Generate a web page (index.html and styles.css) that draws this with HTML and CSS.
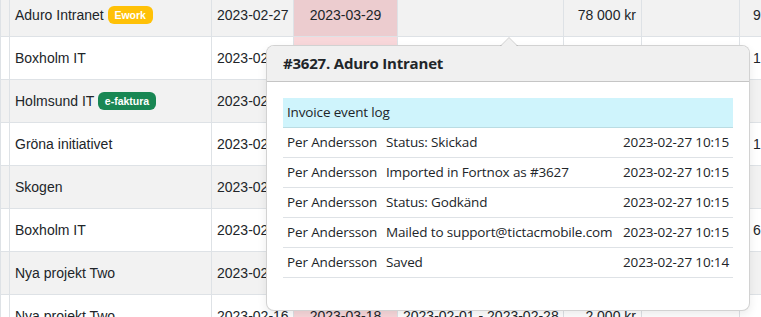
FILE: index.html
```html
<!DOCTYPE html>
<html lang="sv">
<head>
    <meta charset="UTF-8">
    <meta name="viewport" content="width=device-width, initial-scale=1.0">
    <title>Fakturor</title>
    <link rel="stylesheet" href="styles.css">
</head>
<body>
    <div class="page">
        <table class="invoices">
            <colgroup>
                <col class="c-sel">
                <col class="c-name">
                <col class="c-date">
                <col class="c-due">
                <col class="c-period">
                <col class="c-amount">
                <col class="c-extra">
                <col class="c-last">
            </colgroup>
            <tbody>
                <tr>
                    <td></td>
                    <td>Aduro Intranet <span class="badge badge-ework">Ework</span></td>
                    <td>2023-02-27</td>
                    <td class="due">2023-03-29</td>
                    <td></td>
                    <td class="amount">78 000 kr</td>
                    <td></td>
                    <td class="last">9</td>
                </tr>
                <tr>
                    <td></td>
                    <td>Boxholm IT</td>
                    <td>2023-02-24</td>
                    <td class="due">2023-03-26</td>
                    <td>2023-02-01 - 2023-02-28</td>
                    <td class="amount">12 500 kr</td>
                    <td></td>
                    <td class="last">1</td>
                </tr>
                <tr>
                    <td></td>
                    <td>Holmsund IT <span class="badge badge-efaktura">e-faktura</span></td>
                    <td>2023-02-22</td>
                    <td class="due">2023-03-24</td>
                    <td>2023-02-01 - 2023-02-28</td>
                    <td class="amount">8 000 kr</td>
                    <td></td>
                    <td class="last"></td>
                </tr>
                <tr>
                    <td></td>
                    <td>Gröna initiativet</td>
                    <td>2023-02-20</td>
                    <td class="due">2023-03-22</td>
                    <td>2023-02-01 - 2023-02-28</td>
                    <td class="amount">15 000 kr</td>
                    <td></td>
                    <td class="last">1</td>
                </tr>
                <tr>
                    <td></td>
                    <td>Skogen</td>
                    <td>2023-02-20</td>
                    <td class="due">2023-03-22</td>
                    <td>2023-02-01 - 2023-02-28</td>
                    <td class="amount">4 000 kr</td>
                    <td></td>
                    <td class="last"></td>
                </tr>
                <tr>
                    <td></td>
                    <td>Boxholm IT</td>
                    <td>2023-02-17</td>
                    <td class="due">2023-03-19</td>
                    <td>2023-01-01 - 2023-01-31</td>
                    <td class="amount">6 000 kr</td>
                    <td></td>
                    <td class="last">6</td>
                </tr>
                <tr>
                    <td></td>
                    <td>Nya projekt Two</td>
                    <td>2023-02-16</td>
                    <td class="due">2023-03-18</td>
                    <td>2023-02-01 - 2023-02-28</td>
                    <td class="amount">3 000 kr</td>
                    <td></td>
                    <td class="last"></td>
                </tr>
                <tr>
                    <td></td>
                    <td>Nya projekt Two</td>
                    <td>2023-02-16</td>
                    <td class="due">2023-03-18</td>
                    <td>2023-02-01 - 2023-02-28</td>
                    <td class="amount">2 000 kr</td>
                    <td></td>
                    <td class="last"></td>
                </tr>
            </tbody>
        </table>

        <!-- Popover med fakturans händelselogg -->
        <div class="popover">
            <div class="popover-arrow"></div>
            <h3 class="popover-header">#3627. Aduro Intranet</h3>
            <div class="popover-body">
                <table class="log">
                    <tr class="log-title">
                        <td colspan="3">Invoice event log</td>
                    </tr>
                    <tr>
                        <td>Per Andersson</td>
                        <td>Status: Skickad</td>
                        <td class="time">2023-02-27 10:15</td>
                    </tr>
                    <tr>
                        <td>Per Andersson</td>
                        <td>Imported in Fortnox as #3627</td>
                        <td class="time">2023-02-27 10:15</td>
                    </tr>
                    <tr>
                        <td>Per Andersson</td>
                        <td>Status: Godkänd</td>
                        <td class="time">2023-02-27 10:15</td>
                    </tr>
                    <tr>
                        <td>Per Andersson</td>
                        <td>Mailed to support@tictacmobile.com</td>
                        <td class="time">2023-02-27 10:15</td>
                    </tr>
                    <tr>
                        <td>Per Andersson</td>
                        <td>Saved</td>
                        <td class="time">2023-02-27 10:14</td>
                    </tr>
                </table>
            </div>
        </div>
    </div>
</body>
</html>
```

FILE: styles.css
```css
body {
    margin: 0;
    padding: 0;
    background-color: #fff;
    color: #212529;
    font-family: "Liberation Sans", Arial, sans-serif;
    overflow: hidden;
}

.page {
    position: relative;
    width: 761px;
    height: 317px;
    overflow: hidden;
}

.invoices {
    width: 820px;
    margin-top: -7px;
    border-collapse: collapse;
    table-layout: fixed;
    font-size: 14px;
}

.c-sel { width: 9px; }
.c-name { width: 202px; }
.c-date { width: 82px; }
.c-due { width: 104px; }
.c-period { width: 166px; }
.c-amount { width: 78px; }
.c-extra { width: 98px; }
.c-last { width: 81px; }

.invoices td {
    padding: 11px 5px 10px;
    line-height: 21px;
    border: 1px solid #dee2e6;
    white-space: nowrap;
    overflow: hidden;
}

.invoices tr:nth-child(odd) td {
    background-color: #f2f2f2;
}

.invoices td.due {
    background-color: #f8d7da;
    text-align: center;
}

.invoices tr:nth-child(odd) td.due {
    background-color: #eccccf;
}

.invoices td.amount {
    text-align: right;
}

.invoices td.last {
    padding-left: 13px;
}

.badge {
    display: inline-block;
    padding: 0.35em 0.65em;
    font-size: 10.5px;
    font-weight: bold;
    line-height: 1;
    color: #fff;
    border-radius: 6px;
    vertical-align: 1px;
}

.badge-ework {
    background-color: #ffc107;
}

.badge-efaktura {
    background-color: #198754;
}

/* Popover */
.popover {
    position: absolute;
    left: 266px;
    top: 45px;
    width: 482px;
    background-color: #fff;
    border: 1px solid rgba(0, 0, 0, 0.175);
    border-radius: 8px;
    box-shadow: 0 4px 10px rgba(0, 0, 0, 0.08);
    font-family: "Open Sans", "Noto Sans", sans-serif;
}

.popover-arrow {
    position: absolute;
    top: -9px;
    left: 233px;
    width: 0;
    height: 0;
    border-left: 9px solid transparent;
    border-right: 9px solid transparent;
    border-bottom: 9px solid rgba(0, 0, 0, 0.175);
}

.popover-arrow::after {
    content: "";
    position: absolute;
    left: -8px;
    top: 1px;
    border-left: 8px solid transparent;
    border-right: 8px solid transparent;
    border-bottom: 8px solid #f0f0f0;
}

.popover-header {
    margin: 0;
    padding: 8px 16px;
    font-size: 15px;
    font-weight: bold;
    line-height: 19px;
    letter-spacing: -0.2px;
    background-color: #f0f0f0;
    border-bottom: 1px solid rgba(0, 0, 0, 0.175);
    border-radius: 7px 7px 0 0;
}

.popover-body {
    padding: 16px;
}

.log {
    width: 100%;
    margin-bottom: 16px;
    border-collapse: collapse;
    font-size: 13.5px;
    letter-spacing: -0.15px;
}

.log td {
    padding: 4px;
    line-height: 21px;
    border-bottom: 1px solid #dee2e6;
    white-space: nowrap;
}

.log .log-title td {
    background-color: #cff4fc;
    border-bottom-color: #badce3;
}

.log td.time {
    text-align: right;
}
```
